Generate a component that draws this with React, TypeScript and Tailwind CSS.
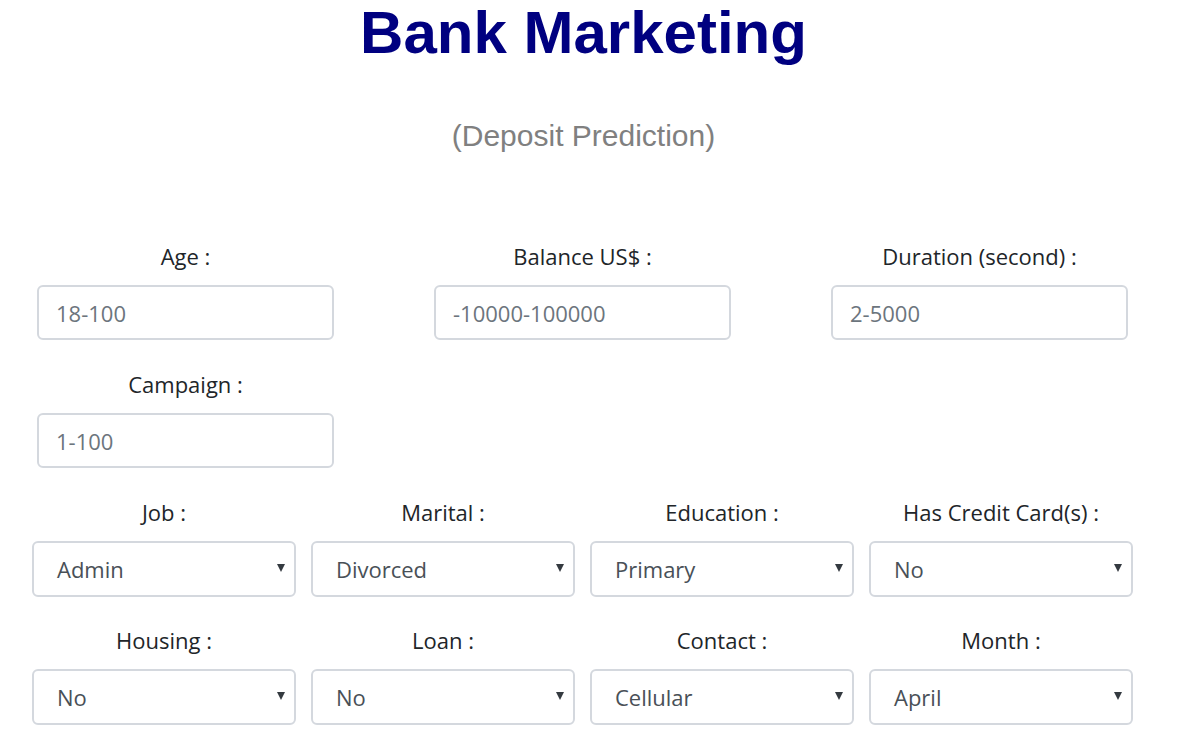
const Field = ({ label, placeholder }: { label: string; placeholder: string }) => (
  <div className="flex w-[297px] flex-col items-center">
    <label className="mb-[12px] text-[22px] leading-[33px] text-[#212529]">{label}</label>
    <input
      placeholder={placeholder}
      className="h-[55px] w-full rounded-[6px] border-2 border-[#d4d8de] bg-white px-[17px] text-[22px] text-[#495057] outline-none placeholder:text-[#6c757d]"
    />
  </div>
);

const Select = ({ label, value }: { label: string; value: string }) => (
  <div className="flex w-[264px] flex-col items-center">
    <label className="mb-[12px] text-[22px] leading-[33px] text-[#212529]">{label}</label>
    <div className="relative h-[56px] w-full rounded-[6px] border-2 border-[#d4d8de] bg-white">
      <span className="absolute left-[23px] top-1/2 -translate-y-1/2 text-[22px] text-[#495057]">{value}</span>
      <svg className="absolute right-[8px] top-[20px]" width="10" height="10" viewBox="0 0 10 10">
        <path d="M1 1 L9 1 L5 9 Z" fill="#343a40" />
      </svg>
    </div>
  </div>
);

export default function App() {
  return (
    <div className="min-h-screen w-[1167px] bg-white font-['Open_Sans',sans-serif]">
      <h1 className="pt-[1px] text-center font-['Liberation_Sans',Arial,sans-serif] text-[60px] font-bold leading-[64px] text-[#000080]">
        Bank Marketing
      </h1>
      <p className="mt-[53px] text-center font-['Liberation_Sans',Arial,sans-serif] text-[30px] leading-[36px] text-[#808080]">
        (Deposit Prediction)
      </p>
      <div className="mt-[86px] flex flex-col gap-[28px] pl-[37px]">
        <div className="flex gap-[100px]">
          <Field label="Age :" placeholder="18-100" />
          <Field label="Balance US$ :" placeholder="-10000-100000" />
          <Field label="Duration (second) :" placeholder="2-5000" />
        </div>
        <div className="flex">
          <Field label="Campaign :" placeholder="1-100" />
        </div>
      </div>
      <div className="mt-[28px] flex flex-col gap-[27px] pl-[32px]">
        <div className="flex gap-[15px]">
          <Select label="Job :" value="Admin" />
          <Select label="Marital :" value="Divorced" />
          <Select label="Education :" value="Primary" />
          <Select label="Has Credit Card(s) :" value="No" />
        </div>
        <div className="flex gap-[15px]">
          <Select label="Housing :" value="No" />
          <Select label="Loan :" value="No" />
          <Select label="Contact :" value="Cellular" />
          <Select label="Month :" value="April" />
        </div>
      </div>
    </div>
  );
}
